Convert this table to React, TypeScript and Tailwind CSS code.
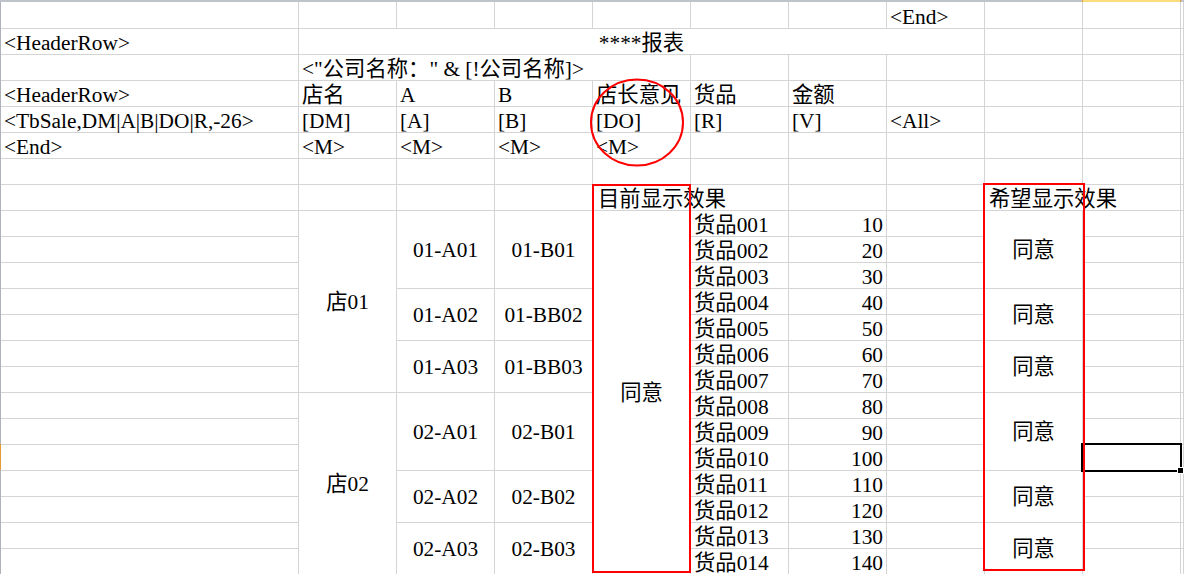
import React from 'react';

// one spreadsheet cell: gridlines on right and bottom, text sits on the bottom like Excel
const Cell: React.FC<{ className?: string; children?: React.ReactNode }> = ({ className = '', children }) => (
  <div className={`border-r border-b border-[#d4d4d4] flex whitespace-nowrap ${className}`}>{children}</div>
);

// goods rows 9..22, row classes written out so Tailwind picks them up
const goods = [
  { id: '001', row: 'row-start-9' },
  { id: '002', row: 'row-start-10' },
  { id: '003', row: 'row-start-11' },
  { id: '004', row: 'row-start-12' },
  { id: '005', row: 'row-start-13' },
  { id: '006', row: 'row-start-14' },
  { id: '007', row: 'row-start-15' },
  { id: '008', row: 'row-start-16' },
  { id: '009', row: 'row-start-17' },
  { id: '010', row: 'row-start-18' },
  { id: '011', row: 'row-start-19' },
  { id: '012', row: 'row-start-20' },
  { id: '013', row: 'row-start-21' },
  { id: '014', row: 'row-start-22' },
];

export default function App() {
  // empty cells that fill every slot not taken by a placed cell
  const fillers = Array.from({ length: 107 }, (_, i) => (
    <div key={`f-${i}`} className="border-r border-b border-[#d4d4d4]" />
  ));

  return (
    <div className="relative h-[574px] w-[1184px] overflow-hidden bg-white text-black font-['Liberation_Serif','Noto_Sans_CJK_SC',serif] text-[21.33px] leading-[22px]">
      {/* column header edge, column J highlighted */}
      <div className="flex h-[2px]">
        <div className="w-[1082px] bg-[#bfc4ca]" />
        <div className="w-[99px] bg-[#fcdc7c] border-x border-[#e5a23e]" />
        <div className="flex-1 bg-[#bfc4ca]" />
      </div>

      <div className="flex">
        {/* row header edge, row 18 highlighted */}
        <div className="flex w-[1px] flex-col">
          <div className="h-[442px] bg-[#aeb3b9]" />
          <div className="h-[26px] bg-[#e39b3a]" />
          <div className="h-[104px] bg-[#aeb3b9]" />
        </div>

        <div className="grid flex-1 grid-cols-[298px_repeat(9,98px)_1fr] grid-rows-[27px_repeat(21,26px)]">
          {/* row 1 */}
          <Cell className="col-start-8 row-start-1 items-end pl-[3px]">&lt;End&gt;</Cell>

          {/* row 2 */}
          <Cell className="col-start-1 row-start-2 items-end pl-[3px]">&lt;HeaderRow&gt;</Cell>
          <Cell className="col-start-2 col-span-7 row-start-2 items-end justify-center">****报表</Cell>

          {/* row 3 */}
          <Cell className="col-start-2 col-span-4 row-start-3 items-end pl-[3px]">&lt;"公司名称：" &amp; [!公司名称]&gt;</Cell>

          {/* row 4 */}
          <Cell className="col-start-1 row-start-4 items-end pl-[3px]">&lt;HeaderRow&gt;</Cell>
          <Cell className="col-start-2 row-start-4 items-end pl-[3px]">店名</Cell>
          <Cell className="col-start-3 row-start-4 items-end pl-[3px]">A</Cell>
          <Cell className="col-start-4 row-start-4 items-end pl-[3px]">B</Cell>
          <Cell className="col-start-5 row-start-4 items-end pl-[3px]">店长意见</Cell>
          <Cell className="col-start-6 row-start-4 items-end pl-[3px]">货品</Cell>
          <Cell className="col-start-7 row-start-4 items-end pl-[3px]">金额</Cell>

          {/* row 5 */}
          <Cell className="col-start-1 row-start-5 items-end pl-[3px]">&lt;TbSale,DM|A|B|DO|R,-26&gt;</Cell>
          <Cell className="col-start-2 row-start-5 items-end pl-[3px]">[DM]</Cell>
          <Cell className="col-start-3 row-start-5 items-end pl-[3px]">[A]</Cell>
          <Cell className="col-start-4 row-start-5 items-end pl-[3px]">[B]</Cell>
          <Cell className="col-start-5 row-start-5 items-end pl-[3px]">[DO]</Cell>
          <Cell className="col-start-6 row-start-5 items-end pl-[3px]">[R]</Cell>
          <Cell className="col-start-7 row-start-5 items-end pl-[3px]">[V]</Cell>
          <Cell className="col-start-8 row-start-5 items-end pl-[3px]">&lt;All&gt;</Cell>

          {/* row 6 */}
          <Cell className="col-start-1 row-start-6 items-end pl-[3px]">&lt;End&gt;</Cell>
          <Cell className="col-start-2 row-start-6 items-end pl-[3px]">&lt;M&gt;</Cell>
          <Cell className="col-start-3 row-start-6 items-end pl-[3px]">&lt;M&gt;</Cell>
          <Cell className="col-start-4 row-start-6 items-end pl-[3px]">&lt;M&gt;</Cell>
          <Cell className="col-start-5 row-start-6 items-end pl-[3px]">&lt;M&gt;</Cell>

          {/* row 8 */}
          <Cell className="col-start-5 col-span-2 row-start-8 items-end pl-[5px]">目前显示效果</Cell>
          <Cell className="col-start-9 col-span-2 row-start-8 items-end pl-[4px]">希望显示效果</Cell>

          {/* store column */}
          <Cell className="col-start-2 row-start-9 row-span-7 items-center justify-center">店01</Cell>
          <Cell className="col-start-2 row-start-16 row-span-7 items-center justify-center">店02</Cell>

          {/* A column */}
          <Cell className="col-start-3 row-start-9 row-span-3 items-center justify-center">01-A01</Cell>
          <Cell className="col-start-3 row-start-12 row-span-2 items-center justify-center">01-A02</Cell>
          <Cell className="col-start-3 row-start-14 row-span-2 items-center justify-center">01-A03</Cell>
          <Cell className="col-start-3 row-start-16 row-span-3 items-center justify-center">02-A01</Cell>
          <Cell className="col-start-3 row-start-19 row-span-2 items-center justify-center">02-A02</Cell>
          <Cell className="col-start-3 row-start-21 row-span-2 items-center justify-center">02-A03</Cell>

          {/* B column */}
          <Cell className="col-start-4 row-start-9 row-span-3 items-center justify-center">01-B01</Cell>
          <Cell className="col-start-4 row-start-12 row-span-2 items-center justify-center">01-BB02</Cell>
          <Cell className="col-start-4 row-start-14 row-span-2 items-center justify-center">01-BB03</Cell>
          <Cell className="col-start-4 row-start-16 row-span-3 items-center justify-center">02-B01</Cell>
          <Cell className="col-start-4 row-start-19 row-span-2 items-center justify-center">02-B02</Cell>
          <Cell className="col-start-4 row-start-21 row-span-2 items-center justify-center">02-B03</Cell>

          {/* current result: one merged cell */}
          <Cell className="col-start-5 row-start-9 row-span-14 items-center justify-center">同意</Cell>

          {/* goods and amounts */}
          {goods.map((g, i) => (
            <React.Fragment key={g.id}>
              <Cell className={`col-start-6 ${g.row} items-end pl-[3px]`}>货品{g.id}</Cell>
              <Cell className={`col-start-7 ${g.row} items-end justify-end pr-[3px]`}>{(i + 1) * 10}</Cell>
            </React.Fragment>
          ))}

          {/* wanted result */}
          <Cell className="col-start-9 row-start-9 row-span-3 items-center justify-center">同意</Cell>
          <Cell className="col-start-9 row-start-12 row-span-2 items-center justify-center">同意</Cell>
          <Cell className="col-start-9 row-start-14 row-span-2 items-center justify-center">同意</Cell>
          <Cell className="col-start-9 row-start-16 row-span-3 items-center justify-center">同意</Cell>
          <Cell className="col-start-9 row-start-19 row-span-2 items-center justify-center">同意</Cell>
          <Cell className="col-start-9 row-start-21 row-span-2 items-center justify-center">同意</Cell>

          {fillers}
        </div>
      </div>

      {/* selected cell J18 */}
      <div className="absolute left-[1081px] top-[443px] h-[29px] w-[101px] border-2 border-black" />
      <div className="absolute left-[1177px] top-[467px] h-[7px] w-[7px] border border-white bg-black" />

      {/* red annotations */}
      <svg className="absolute left-[588px] top-[77px]" width="98" height="91" viewBox="0 0 98 91">
        <ellipse cx="49" cy="45.5" rx="46" ry="43" fill="none" stroke="#ff0000" strokeWidth="2" />
      </svg>
      <div className="absolute left-[592px] top-[184px] h-[389px] w-[99px] border-2 border-[#ff0000]" />
      <div className="absolute left-[983px] top-[183px] h-[388px] w-[102px] border-2 border-[#ff0000]" />
    </div>
  );
}
